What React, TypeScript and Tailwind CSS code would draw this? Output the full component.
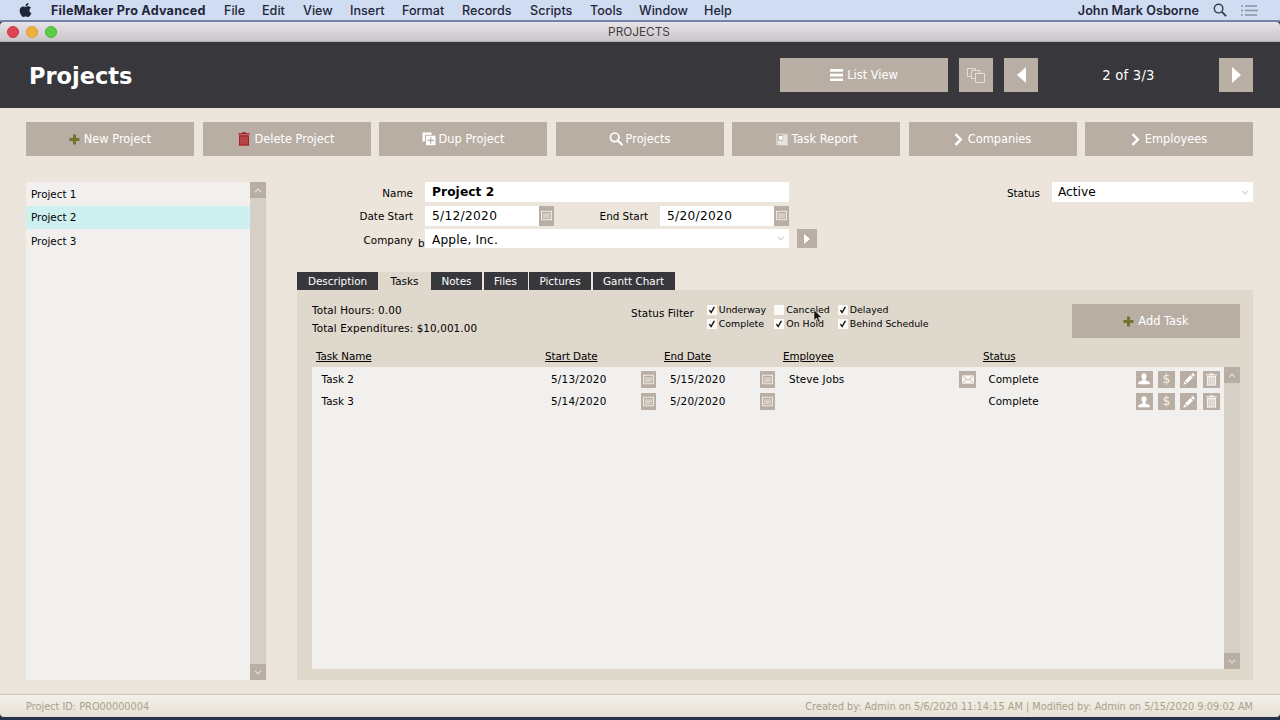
import type { ReactNode } from 'react';
import { clsx } from 'clsx';

type IconName = 'plus' | 'trash' | 'dup' | 'search' | 'report' | 'chevron';

const menus = [
  { label: 'File', width: 'w-[38px]' },
  { label: 'Edit', width: 'w-[41px]' },
  { label: 'View', width: 'w-[47px]' },
  { label: 'Insert', width: 'w-[52px]' },
  { label: 'Format', width: 'w-[60px]' },
  { label: 'Records', width: 'w-[68px]' },
  { label: 'Scripts', width: 'w-[60px]' },
  { label: 'Tools', width: 'w-[49px]' },
  { label: 'Window', width: 'w-[65px]' },
  { label: 'Help', width: 'w-[40px]' },
];

const actions: { label: string; icon: IconName }[] = [
  { label: 'New Project', icon: 'plus' },
  { label: 'Delete Project', icon: 'trash' },
  { label: 'Dup Project', icon: 'dup' },
  { label: 'Projects', icon: 'search' },
  { label: 'Task Report', icon: 'report' },
  { label: 'Companies', icon: 'chevron' },
  { label: 'Employees', icon: 'chevron' },
];

const projects = ['Project 1', 'Project 2', 'Project 3'];

const tabs = [
  { label: 'Description', width: 'w-[81px]' },
  { label: 'Tasks', width: 'w-[53px]' },
  { label: 'Notes', width: 'w-[51px]' },
  { label: 'Files', width: 'w-[44px]' },
  { label: 'Pictures', width: 'w-[62px]' },
  { label: 'Gantt Chart', width: 'w-[82px]' },
];

const filters = [
  { label: 'Underway', checked: true },
  { label: 'Canceled', checked: false },
  { label: 'Delayed', checked: true },
  { label: 'Complete', checked: true },
  { label: 'On Hold', checked: true },
  { label: 'Behind Schedule', checked: true },
];

const tasks = [
  { name: 'Task 2', start: '5/13/2020', end: '5/15/2020', employee: 'Steve Jobs', status: 'Complete' },
  { name: 'Task 3', start: '5/14/2020', end: '5/20/2020', employee: '', status: 'Complete' },
];

function TrashIcon({ className, color, gap }: { className: string; color: string; gap: string }) {
  return (
    <svg viewBox="0 0 12 14" className={className}>
      <path d="M4 1.2V.3h4v.9h3.8v1.4H.2V1.2z" fill={color} />
      <path d="M1 3.2h10V13.7H1z" fill={color} />
      <path d="M3 4.5v8M5 4.5v8M7 4.5v8M9 4.5v8" stroke={gap} strokeWidth=".7" />
    </svg>
  );
}

function ActionIcon({ name }: { name: IconName }) {
  switch (name) {
    case 'plus':
      return (
        <svg viewBox="0 0 11 11" className="mr-[4px] size-[11px]">
          <path d="M4 .5h3V4h3.5v3H7v3.5H4V7H.5V4H4z" fill="#737430" />
        </svg>
      );
    case 'trash':
      return <TrashIcon className="mr-[4px] h-[14px] w-[12px]" color="#a81e26" gap="#cf8d88" />;
    case 'dup':
      return (
        <svg viewBox="0 0 14 14" className="mr-[3px] size-[14px]">
          <path d="M.5.5h9v2.2H3v6.8H.5z" fill="#fff" />
          <path d="M4 3.7h9.5v9.5H4z" fill="#fff" />
          <path d="M8.75 5.2v6.5M5.5 8.45H12" stroke="#b9aea4" strokeWidth="1.2" />
        </svg>
      );
    case 'search':
      return (
        <svg viewBox="0 0 14 14" className="mr-[3px] size-[14px]" fill="none" stroke="#fff">
          <circle cx="5.7" cy="5.3" r="4.3" strokeWidth="1.7" />
          <path d="M8.8 8.5l4 4" strokeWidth="2.2" strokeLinecap="round" />
        </svg>
      );
    case 'report':
      return (
        <svg viewBox="0 0 14 13" className="mr-[3px] h-[13px] w-[14px]">
          <path d="M1 .5h12v12H1z" fill="#d5cdc5" />
          <path d="M2.6 2h4.2v5.5H2.6z" fill="#b9aea4" />
          <path d="M3.8 3h3.5v3.8H3.8z" fill="#fff" />
          <path d="M8.5 3H12M8.5 5H12M8.5 7H12M3 9h9M3 11h9" stroke="#fff" strokeWidth=".8" />
        </svg>
      );
    default:
      return (
        <svg viewBox="0 0 9 13" className="mr-[5px] h-[13px] w-[9px]">
          <path d="M1.5 1.2L6.8 6.5l-5.3 5.3" fill="none" stroke="#fff" strokeWidth="2.4" />
        </svg>
      );
  }
}

function Button({ label, icon }: { label: string; icon: ReactNode }) {
  return (
    <button className="flex h-[34px] w-[168px] shrink-0 items-center justify-center bg-[#b9aea4] text-[11.4px] whitespace-nowrap text-white">
      {icon}
      <span className="pt-[2px]">{label}</span>
    </button>
  );
}

function Chevron({ up, color = '#e8e0d8' }: { up?: boolean; color?: string }) {
  return (
    <svg viewBox="0 0 8 5" className="h-[5px] w-[8px]" fill="none" stroke={color} strokeWidth="1.2">
      <path d={up ? 'M1 4.2L4 1.2l3 3' : 'M1 .8l3 3 3-3'} />
    </svg>
  );
}

function ScrollBar() {
  return (
    <div className="flex w-4 shrink-0 flex-col justify-between bg-[#d6cfc5]">
      <div className="flex h-4 items-center justify-center bg-[#b9aea4]"><Chevron up /></div>
      <div className="flex h-4 items-center justify-center bg-[#b9aea4]"><Chevron /></div>
    </div>
  );
}

function CalendarButton({ className }: { className: string }) {
  return (
    <div className={clsx('flex w-[15px] shrink-0 items-center justify-center bg-[#b9aea4]', className)}>
      <svg viewBox="0 0 11 11" className="size-[11px]">
        <path d="M.6 1.200h9.800v8.600H.6z" fill="#b9aea4" stroke="#f0ebe6" strokeWidth="1.1" />
        <path d="M2 3.300h7v5H2z" fill="#cfc7be" />
        <path d="M2.200 4h6.600M2.200 5.800h6.600M2.200 7.600h4.800" stroke="#e0d9d2" strokeWidth=".8" />
      </svg>
    </div>
  );
}

function RowButton({ children }: { children: ReactNode }) {
  return (
    <div className="flex size-[17px] shrink-0 items-center justify-center bg-[#b9aea4] text-[12.5px] leading-none text-[#f3efeb]">
      {children}
    </div>
  );
}

function MenuBar() {
  return (
    <div className="flex h-[22px] items-center border-b-2 border-[#7184a3] bg-[#d0dcf1] pl-[19px] font-['Inter',sans-serif] text-[12.6px] font-medium text-[#1f2638]">
      <svg viewBox="0 0 384 512" className="mr-[19px] h-[16px] w-[13px]" fill="#1f2638">
        <path d="M318.7 268.7c-.2-36.7 16.4-64.4 50-84.8-18.8-26.9-47.2-41.7-84.7-44.6-35.5-2.8-74.3 20.7-88.5 20.7-15 0-49.4-19.7-76.4-19.7C63.3 141.2 4 184.8 4 273.5q0 39.3 14.4 81.2c12.8 36.7 59 126.7 107.2 125.2 25.2-.6 43-17.9 75.8-17.9 31.8 0 48.3 17.9 76.4 17.9 48.6-.7 90.4-82.5 102.6-119.3-65.2-30.7-61.7-90-61.7-91.9zm-56.6-164.2c27.3-32.4 24.8-61.9 24-72.5-24.1 1.4-52 16.4-67.9 34.9-17.5 19.8-27.8 44.3-25.6 71.9 26.1 2 49.9-11.4 69.5-34.3z" />
      </svg>
      <span className="w-[173px] pt-[2px] font-bold tracking-[0.23px] whitespace-nowrap">FileMaker Pro Advanced</span>
      {menus.map((menu) => (
        <span key={menu.label} className={clsx('shrink-0 pt-[2px]', menu.width)}>{menu.label}</span>
      ))}
      <span className="ml-auto pt-[2px] font-semibold tracking-[0.05px]">John Mark Osborne</span>
      <svg viewBox="0 0 14 14" className="ml-[14px] size-[14px]" fill="none" stroke="#333c50" strokeWidth="1.4">
        <circle cx="5.6" cy="5.6" r="4.3" />
        <path d="M8.8 8.8l4.4 4.4" strokeWidth="1.8" />
      </svg>
      <svg viewBox="0 0 17 11" className="mr-[22px] ml-[14px] h-[11px] w-[17px]" stroke="#8791a8" strokeWidth="1.3">
        <path d="M0 1h2M0 5.5h2M0 10h2M4 1h12M4 5.5h13M4 10h12" />
      </svg>
    </div>
  );
}

function TitleBar() {
  return (
    <div className="relative flex h-[20px] items-center justify-center rounded-t-[4px] border-b border-[#b5b0b3] bg-linear-to-b from-[#e6e2e7] to-[#cbc6ca] font-['Inter',sans-serif] text-[11.8px] text-[#3e3c40]">
      <div className="absolute left-[7px] flex gap-[7px]">
        <i className="size-3 rounded-full border border-[#c43b49] bg-[#de4352]" />
        <i className="size-3 rounded-full border border-[#d79c37] bg-[#eeb13e]" />
        <i className="size-3 rounded-full border border-[#48b637] bg-[#5bcf43]" />
      </div>
      <span className="pt-[2px] pr-[2px]">PROJECTS</span>
    </div>
  );
}

function Header() {
  return (
    <header className="flex h-[66px] items-center bg-[#37373c] pr-[27px] pl-[29px] text-white">
      <h1 className="pt-[3px] text-[22.5px] font-bold">Projects</h1>
      <div className="ml-auto flex items-center">
        <Button
          label="List View"
          icon={
            <svg viewBox="0 0 13 12" className="mr-[4px] h-[12px] w-[13px]" fill="#fff">
              <path d="M0 0h13v2.8H0zM0 4.7h13v2.8H0zM0 9.4h13v2.6H0z" />
            </svg>
          }
        />
        <div className="ml-[11px] flex size-[34px] items-center justify-center bg-[#b9aea4]">
          <svg viewBox="0 0 18 15" className="h-[15px] w-[18px]" stroke="#e6dfd8" fill="#b9aea4">
            <path d="M.5.5h8v8h-8z" />
            <path d="M4.5 2.500h8v8h-8z" />
            <path d="M8.500 5.500h9v9h-9z" />
          </svg>
        </div>
        <div className="ml-[11px] flex size-[34px] items-center justify-center bg-[#b9aea4]">
          <svg viewBox="0 0 9 16" className="h-[16px] w-[9px]" fill="#fff"><path d="M9 0v16L0 8z" /></svg>
        </div>
        <span className="w-[181px] pt-px text-center text-[13.2px] tracking-[0.2px]">2 of 3/3</span>
        <div className="flex size-[34px] items-center justify-center bg-[#b9aea4]">
          <svg viewBox="0 0 9 16" className="h-[16px] w-[9px]" fill="#fff"><path d="M0 0v16l9-8z" /></svg>
        </div>
      </div>
    </header>
  );
}

function ProjectList() {
  return (
    <aside className="flex h-[498px] w-[240px] shrink-0">
      <ul className="flex-1 bg-[#f1f0ee]">
        {projects.map((project, i) => (
          <li key={project} className={clsx('flex h-[23.5px] items-center pt-[2px] pl-[5px] text-[10.4px]', i === 1 && 'bg-[#cef0f0]')}>
            {project}
          </li>
        ))}
      </ul>
      <ScrollBar />
    </aside>
  );
}

function Field({ className, children }: { className: string; children: ReactNode }) {
  return (
    <div className={clsx('flex shrink-0 items-center justify-between bg-white pl-[7px] text-[12.2px]', className)}>
      {children}
    </div>
  );
}

function ProjectForm() {
  return (
    <div className="flex h-[90px] flex-col gap-[3.5px] text-[10.4px]">
      <div className="flex h-[20px] items-center">
        <label className="w-[116px] pt-[3px] text-right">Name</label>
        <Field className="ml-[12px] h-[20px] w-[364px] font-bold">
          <span className="pt-px tracking-[0.1px]">Project 2</span>
        </Field>
        <label className="ml-auto pt-[3px]">Status</label>
        <Field className="ml-[12px] h-[20px] w-[201px]">
          <span className="-ml-px pt-px">Active</span>
          <span className="mr-[4px]"><Chevron color="#d5d0cb" /></span>
        </Field>
      </div>
      <div className="flex h-[20px] items-center">
        <label className="w-[116px] pt-[2px] text-right">Date Start</label>
        <Field className="ml-[12px] h-[20px] w-[114px] pt-[2px] tracking-[0.3px]">5/12/2020</Field>
        <CalendarButton className="h-[20px]" />
        <label className="w-[94px] pt-[2px] text-right">End Start</label>
        <Field className="ml-[12px] h-[20px] w-[114px] pt-[2px] tracking-[0.3px]">5/20/2020</Field>
        <CalendarButton className="h-[20px]" />
      </div>
      <div className="flex h-[19px] items-center">
        <label className="w-[116px] pt-[4px] text-right">Company</label>
        <span className="w-[12px] pt-[10px] pl-[5px]">b</span>
        <Field className="h-[19px] w-[364px] tracking-[0.15px]">
          <span className="pt-[3px]">Apple, Inc.</span>
          <span className="mr-[4px]"><Chevron color="#d5d0cb" /></span>
        </Field>
        <div className="ml-[8px] flex h-[19px] w-[20px] items-center justify-center bg-[#b9aea4]">
          <svg viewBox="0 0 6 10" className="h-[10px] w-[6px]" fill="#fff"><path d="M0 0v10l6-5z" /></svg>
        </div>
      </div>
    </div>
  );
}

function StatusFilter() {
  return (
    <div className="relative flex items-start text-[9.4px]">
      <span className="mr-[13px] pt-[4px] text-[10.4px] leading-[13px] tracking-[0.05px]">Status Filter</span>
      <div className="grid grid-cols-[67.500px_63.500px_100px]">
        {filters.map((filter) => (
          <label key={filter.label} className="flex h-[14px] items-center leading-none whitespace-nowrap">
            <span className="mr-[2px] flex size-[10px] shrink-0 items-center justify-center bg-[#fbfaf9]">
              {filter.checked && (
                <svg viewBox="0 0 8 8" className="size-[8px]" fill="none" stroke="#111" strokeWidth="1.4">
                  <path d="M1.400 4.200l1.700 2.300L6.400.8" />
                </svg>
              )}
            </span>
            {filter.label}
          </label>
        ))}
      </div>
      <svg viewBox="0 0 10 15" className="absolute top-[6px] left-[182px] h-[15px] w-[10px]">
        <path d="M1 .8v10.6l2.5-2.3 1.8 4.2 1.9-.8-1.8-4.1h3.4z" fill="#111" stroke="#eee" strokeWidth=".6" />
      </svg>
    </div>
  );
}

function TaskRow({ task }: { task: (typeof tasks)[number] }) {
  return (
    <div className="flex h-[22.4px] items-center text-[10.4px] whitespace-nowrap">
      <span className="w-[239px] pt-px pl-[9.5px]">{task.name}</span>
      <span className="w-[90px] pt-px tracking-[0.25px]">{task.start}</span>
      <CalendarButton className="h-[17px]" />
      <span className="w-[104px] pt-px pl-[14px] tracking-[0.25px]">{task.end}</span>
      <CalendarButton className="h-[17px]" />
      <span className="w-[184px] pt-px pl-[14px] tracking-[0.1px]">{task.employee}</span>
      <div className="w-[17px]">
        {task.employee && (
          <RowButton>
            <svg viewBox="0 0 12 9" className="h-[9px] w-[12px]">
              <path d="M0 .3h12v8.4H0z" fill="#f7f4f1" />
              <path d="M.5.8L6 5.2 11.5.8M.5 8.3l3.8-4M11.5 8.3l-3.8-4" fill="none" stroke="#b9aea4" strokeWidth=".8" />
            </svg>
          </RowButton>
        )}
      </div>
      <span className="w-[159.5px] pt-px pl-[12.500px]">{task.status}</span>
      <div className="flex gap-[5.4px]">
        <RowButton>
          <svg viewBox="0 0 12 12" className="size-[12px]" fill="#fff">
            <path d="M6 .3c1.8 0 2.6 1.2 2.6 2.8 0 1.3-.5 2.4-1.2 3v1.2l3.6 1.5c.6.3.8.7.8 1.3v1.2H.2v-1.2c0-.6.2-1 .8-1.3l3.6-1.500V6.100c-.7-.6-1.200-1.700-1.200-3C3.400 1.500 4.200.3 6 .3z" />
          </svg>
        </RowButton>
        <RowButton>$</RowButton>
        <RowButton>
          <svg viewBox="0 0 12 12" className="size-[12px]" fill="#fff">
            <path d="M.3 11.7l1-3.3 2.3 2.3zM1.9 7.7l5.6-5.6L9.9 4.5 4.3 10.1zM8.2 1.4l.8-.8c.4-.4.9-.4 1.3 0l1.1 1.1c.4.4.4.9 0 1.3l-.8.8z" />
          </svg>
        </RowButton>
        <RowButton><TrashIcon className="h-[13px] w-[11px]" color="#f4f0ec" gap="#b9aea4" /></RowButton>
      </div>
    </div>
  );
}

function TasksPanel() {
  return (
    <section>
      <nav className="flex h-[18px] text-[10.4px]">
        {tabs.map((tab, i) => (
          <div
            key={tab.label}
            className={clsx(
              'flex items-center justify-center pt-[2px] whitespace-nowrap',
              tab.width,
              i === 1 ? 'bg-[#dfd8cd]' : 'bg-[#37373c] text-white',
              i > 2 && 'ml-[1.5px]'
            )}
          >
            {tab.label}
          </div>
        ))}
      </nav>
      <div className="h-[390px] bg-[#dfd8cd] pr-[13px] pl-[15px]">
        <div className="flex h-[58px] pt-[13px]">
          <div className="w-[319px] text-[10.4px] leading-[18px] tracking-[0.1px] whitespace-nowrap">
            <p className="-mt-[2px]">Total Hours: 0.00</p>
            <p>Total Expenditures: $10,001.00</p>
          </div>
          <StatusFilter />
          <div className="mt-px ml-auto"><Button label="Add Task" icon={<ActionIcon name="plus" />} /></div>
        </div>
        <div className="flex h-[19px] items-start pl-[4px] text-[10.4px] leading-[17px] tracking-[-0.1px] underline">
          <span className="w-[229px]">Task Name</span>
          <span className="w-[119px]">Start Date</span>
          <span className="w-[119px]">End Date</span>
          <span className="w-[200px]">Employee</span>
          <span>Status</span>
        </div>
        <div className="flex h-[302px]">
          <div className="w-[912px] shrink-0 bg-[#f1f0ee] pt-[1px]">
            {tasks.map((task) => <TaskRow key={task.name} task={task} />)}
          </div>
          <ScrollBar />
        </div>
      </div>
    </section>
  );
}

export default function App() {
  return (
    <div className="flex h-[720px] w-[1280px] flex-col overflow-hidden bg-[#26324b] font-['DejaVu_Sans',sans-serif] text-black">
      <MenuBar />
      <TitleBar />
      <Header />
      <main className="h-[586px] bg-[#ece5db] px-[26px] pt-[14px]">
        <div className="flex w-[1227px] justify-between">
          {actions.map((action) => (
            <Button key={action.label} label={action.label} icon={<ActionIcon name={action.icon} />} />
          ))}
        </div>
        <div className="mt-[26px] flex w-[1227px] gap-[31px]">
          <ProjectList />
          <div className="flex-1">
            <ProjectForm />
            <TasksPanel />
          </div>
        </div>
      </main>
      <footer className="flex h-[23px] items-center justify-between rounded-b-[4px] border-t border-[#c9c3b9] bg-linear-to-b from-[#f3f0ea] to-[#e6e1d4] pt-[3px] pr-[27px] pl-[26px] text-[9.75px] text-[#aca08a]">
        <span>Project ID: PRO00000004</span>
        <span>Created by: Admin on 5/6/2020 11:14:15 AM | Modified by: Admin on 5/15/2020 9:09:02 AM</span>
      </footer>
    </div>
  );
}
